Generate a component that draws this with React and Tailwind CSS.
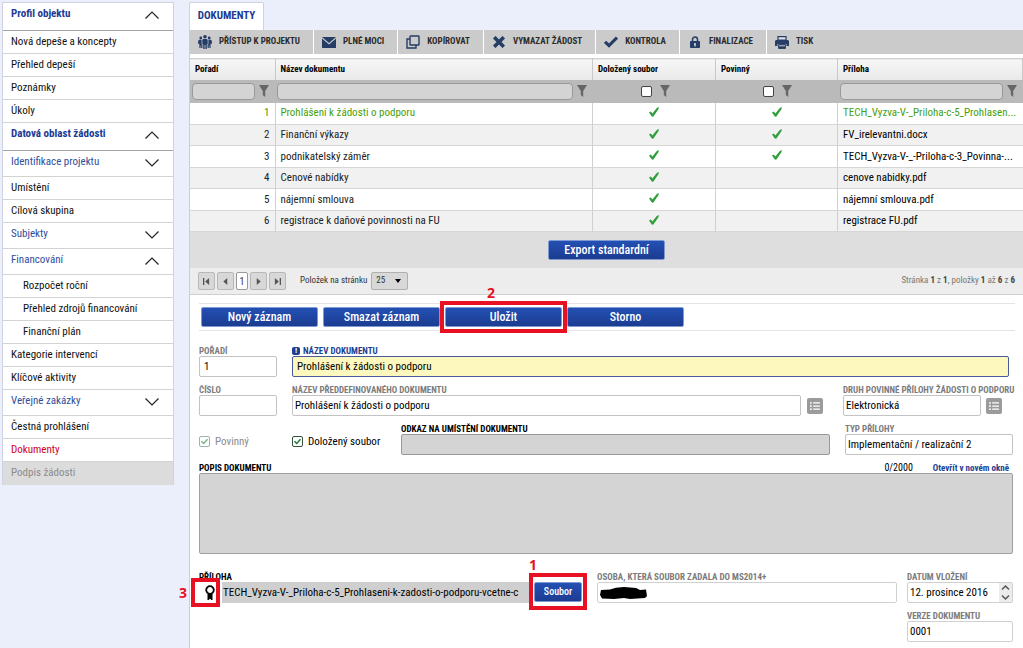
import { FaListUl } from 'react-icons/fa';

const menu = [
  { label: 'Profil objektu', kind: 'header', open: true },
  { label: 'Nová depeše a koncepty' },
  { label: 'Přehled depeší' },
  { label: 'Poznámky' },
  { label: 'Úkoly' },
  { label: 'Datová oblast žádosti', kind: 'header', open: true },
  { label: 'Identifikace projektu', kind: 'group' },
  { label: 'Umístění' },
  { label: 'Cílová skupina' },
  { label: 'Subjekty', kind: 'group' },
  { label: 'Financování', kind: 'group', open: true },
  { label: 'Rozpočet roční', kind: 'child' },
  { label: 'Přehled zdrojů financování', kind: 'child' },
  { label: 'Finanční plán', kind: 'child' },
  { label: 'Kategorie intervencí' },
  { label: 'Klíčové aktivity' },
  { label: 'Veřejné zakázky', kind: 'group' },
  { label: 'Čestná prohlášení' },
  { label: 'Dokumenty', kind: 'active' },
  { label: 'Podpis žádosti', kind: 'disabled' },
];

const menuStyles = {
  header: 'h-7 pl-2 pb-1 font-bold text-[#1c3a94] border-[#a3a3a3]',
  group: 'h-[26px] pl-2 pb-0.5 text-[#2f4d9c] border-[#d3d3d3]',
  item: 'h-[23px] pl-2 text-[#111] border-[#d3d3d3]',
  child: 'h-[23px] pl-5 text-[#111] border-[#d3d3d3]',
  active: 'h-[23px] pl-2 text-[#d0021b] border-[#d3d3d3]',
  disabled: 'h-[23px] pl-2 text-[#8b8b8b] bg-[#dcdcdc] border-[#dcdcdc]',
};

const documents = [
  { id: 1, name: 'Prohlášení k žádosti o podporu', attached: true, required: true, file: 'TECH_Vyzva-V-_Priloha-c-5_Prohlasen...', selected: true },
  { id: 2, name: 'Finanční výkazy', attached: true, required: true, file: 'FV_irelevantni.docx' },
  { id: 3, name: 'podnikatelský záměr', attached: true, required: true, file: 'TECH_Vyzva-V-_-Priloha-c-3_Povinna-...' },
  { id: 4, name: 'Cenové nabídky', attached: true, file: 'cenove nabidky.pdf' },
  { id: 5, name: 'nájemní smlouva', attached: true, file: 'nájemní smlouva.pdf' },
  { id: 6, name: 'registrace k daňové povinnosti na FU', attached: true, file: 'registrace FU.pdf' },
];

function Chevron({ open }) {
  return (
    <svg viewBox="0 0 14 8" className="mr-3.5 h-2 w-3.5 shrink-0" fill="none" stroke="#222" strokeWidth="1.2">
      <path d={open ? 'M0.5 7.5 7 1 13.5 7.5' : 'M0.5 0.5 7 7 13.5 0.5'} />
    </svg>
  );
}

function PeopleIcon() {
  return (
    <svg viewBox="0 0 14 14" className="h-3.5 w-3.5" fill="#263d66">
      <circle cx="7" cy="1.8" r="1.8" />
      <circle cx="2.8" cy="3" r="1.4" />
      <circle cx="11.2" cy="3" r="1.4" />
      <path d="M5.2 4h3.6l.9 1v4.200h-.9V14H7.400v-4h-.8v4H5.200V9.200h-.9V5z" />
      <path d="M1.200 4.800h2.400v4.800h.8V13H3.200v-2.400h-.6V13H1.400V9L0 8.600.2 5.800z" />
      <path d="M12.800 4.800h-2.400v4.800h-.8V13h1.200v-2.400h.6V13h1.200V9l1.400-.4-.2-2.800z" />
    </svg>
  );
}

function MailIcon() {
  return (
    <svg viewBox="0 0 14 11" className="h-[11px] w-3.5" fill="#263d66">
      <path d="M0 0h14L7 6z" />
      <path d="M0 1.6 7 7.5l7-5.9V11H0z" />
    </svg>
  );
}

function CopyIcon() {
  return (
    <svg viewBox="0 0 14 14" className="h-3.5 w-3.5" fill="none" stroke="#263d66" strokeWidth="1.4">
      <rect x="4" y="1" width="9" height="9" rx="0.5" />
      <path d="M4 4H1v9h9v-3" />
    </svg>
  );
}

function CrossIcon() {
  return (
    <svg viewBox="0 0 12 12" className="h-3 w-3" stroke="#263d66" strokeWidth="3.6">
      <path d="M1.2 1.2 10.8 10.8M10.8 1.2 1.2 10.8" />
    </svg>
  );
}

function CheckIcon() {
  return (
    <svg viewBox="0 0 14 12" className="h-3 w-3.5" fill="none" stroke="#263d66" strokeWidth="3.2">
      <path d="M1 5.8 5 9.600 13 1.600" />
    </svg>
  );
}

function LockIcon() {
  return (
    <svg viewBox="0 0 10 12" className="h-3 w-2.5" fill="#263d66">
      <path d="M2.500 6V3.500a2.500 2.500 0 0 1 5 0V6" fill="none" stroke="#263d66" strokeWidth="1.500" />
      <rect y="5" width="10" height="7" rx="0.800" />
      <path d="M5 7a1 1 0 0 1 .6 1.800V10.500H4.400V8.800A1 1 0 0 1 5 7z" fill="#e8e8e8" />
    </svg>
  );
}

function PrintIcon() {
  return (
    <svg viewBox="0 0 14 13" className="h-[13px] w-3.5" fill="#263d66">
      <path d="M3 .6h8V4H3z" fill="#dfe3ea" stroke="#263d66" strokeWidth="1.2" />
      <path d="M1 4h12l1 1v5h-2.500V8h-9v2H0V5z" />
      <path d="M3.600 8.600h6.800v3.800H3.600z" stroke="#263d66" />
      <path d="M4 9.800h6" stroke="#cbcbcb" />
    </svg>
  );
}

const tools = [
  { label: 'PŘÍSTUP K PROJEKTU', icon: <PeopleIcon /> },
  { label: 'PLNÉ MOCI', icon: <MailIcon /> },
  { label: 'KOPÍROVAT', icon: <CopyIcon /> },
  { label: 'VYMAZAT ŽÁDOST', icon: <CrossIcon /> },
  { label: 'KONTROLA', icon: <CheckIcon /> },
  { label: 'FINALIZACE', icon: <LockIcon /> },
  { label: 'TISK', icon: <PrintIcon /> },
];

function Tick() {
  return (
    <svg viewBox="0 0 10 10" className="mx-auto mb-[3px] h-2.5 w-2.5" fill="#2f9e3c">
      <path d="M0 5.500 1.800 4.600 3.400 6.400 7.800 1 10 0 9.400 2.200 4.200 9.800 2.800 9.600z" />
    </svg>
  );
}

function Funnel() {
  return (
    <svg viewBox="0 0 10 12" className="h-3 w-2.5 shrink-0" fill="#666">
      <path d="M0 0h10L6.200 6v6L3.800 10V6z" />
    </svg>
  );
}

function FilterInput({ label }) {
  return (
    <div className="flex items-center gap-1 pl-0.5 pr-1.5">
      <input aria-label={label} className="h-[17px] min-w-0 flex-1 rounded-sm border border-[#999] bg-[#d4d4d4]" />
      <Funnel />
    </div>
  );
}

function FilterCheck({ label }) {
  return (
    <div className="flex items-center justify-center gap-2 pl-0.5">
      <input type="checkbox" aria-label={label} className="h-[11px] w-[11px] appearance-none rounded-xs border border-[#444] bg-white" />
      <Funnel />
    </div>
  );
}

function BlueButton({ children, className = 'w-[117px] text-xs' }) {
  return (
    <button
      type="button"
      className={`block h-5 rounded-xs border border-[#7f9ad0] bg-linear-to-b from-[#2350b4] to-[#1c3c91] font-medium leading-none text-white ${className}`}
    >
      {children}
    </button>
  );
}

function Field({ id, label, className = '', inputClass = 'border-[#c3c3c3] bg-white px-0.5', labelClass = 'text-[#7c7c7c]', badge, value }) {
  return (
    <div className={`flex flex-col ${className}`}>
      <label htmlFor={id} className={`flex items-center gap-0.5 whitespace-nowrap text-[9px] font-bold leading-[10px] ${labelClass}`}>
        {badge}
        {label}
      </label>
      <input id={id} defaultValue={value} className={`h-[21px] w-full rounded-xs border text-[11px] text-black ${inputClass}`} />
    </div>
  );
}

function ListButton({ label }) {
  return (
    <button type="button" aria-label={label} className="mb-0.5 flex h-4 w-4 shrink-0 items-center justify-center self-end rounded-xs bg-[#9b9b9b] text-white">
      <FaListUl size={10} />
    </button>
  );
}

function CheckField({ label, muted, className = '' }) {
  return (
    <label className={`flex items-center gap-[5px] self-start pt-3 text-[11px] leading-[11px] ${muted ? 'text-[#8a8a8a]' : 'text-black'} ${className}`}>
      <span className="relative block h-[11px] w-[11px]">
        <input
          type="checkbox"
          defaultChecked
          disabled={muted}
          className={`block h-[11px] w-[11px] appearance-none rounded-xs border bg-white ${muted ? 'border-[#9db5a6]' : 'border-[#33533f]'}`}
        />
        <svg viewBox="0 0 11 11" className="pointer-events-none absolute inset-0" fill="none" stroke={muted ? '#7fb38c' : '#1f7a38'} strokeWidth="1.5">
          <path d="M2.5 5.3 4.7 7.500 8.500 3.200" />
        </svg>
      </span>
      {label}
    </label>
  );
}

function PagerButton({ label, d }) {
  return (
    <button type="button" aria-label={label} className="flex h-[18px] w-[17px] items-center justify-center rounded-xs border border-[#b8b8b8] bg-[#d8d8d8]">
      <svg viewBox="0 0 8 8" className="h-[7px] w-[7px]" fill="#555">
        <path d={d} />
      </svg>
    </button>
  );
}

function Sidebar() {
  return (
    <nav className="mb-auto ml-0.5 mt-0.5 w-[172px] shrink-0 border border-b-0 border-[#d0d3df] bg-white">
      {menu.map(({ label, kind = 'item', open }) => (
        <a key={label} href="#" className={`flex items-center justify-between border-b text-[11px] ${menuStyles[kind]}`}>
          {label}
          {(kind === 'header' || kind === 'group') && <Chevron open={open} />}
        </a>
      ))}
    </nav>
  );
}

function Toolbar() {
  return (
    <div className="flex h-6 bg-[#cbcbcb]">
      {tools.map(({ label, icon }, i) => (
        <button
          key={label}
          type="button"
          className={`flex items-center gap-[7px] whitespace-nowrap pl-2 pr-[13px] text-[9px] font-bold text-[#2b2b2b] ${i < tools.length - 1 ? 'border-r border-white' : ''}`}
        >
          <span className="flex w-3.5 justify-center">{icon}</span>
          {label}
        </button>
      ))}
    </div>
  );
}

function DocumentTable() {
  return (
    <table className="mt-1 w-full table-fixed border-collapse text-left">
      <colgroup>
        <col className="w-[85px]" />
        <col />
        <col className="w-[123px]" />
        <col className="w-[122px]" />
        <col className="w-[185px]" />
      </colgroup>
      <thead>
        <tr className="h-[21px] border-t border-[#d0d0d0] bg-linear-to-b from-[#f6f6f6] to-[#e9e9e9] text-[9px] text-black">
          {['Pořadí', 'Název dokumentu', 'Doložený soubor', 'Povinný', 'Příloha'].map((title) => (
            <th key={title} className="border-r border-[#c8c8c8] px-[5px] py-0 font-bold">{title}</th>
          ))}
        </tr>
        <tr className="h-[23px] bg-[#bababa]">
          <td className="p-0"><FilterInput label="Pořadí" /></td>
          <td className="p-0"><FilterInput label="Název dokumentu" /></td>
          <td className="p-0"><FilterCheck label="Doložený soubor" /></td>
          <td className="p-0"><FilterCheck label="Povinný" /></td>
          <td className="p-0"><FilterInput label="Příloha" /></td>
        </tr>
      </thead>
      <tbody className="text-[11px] leading-4">
        {documents.map((doc) => (
          <tr
            key={doc.id}
            className={`border-b border-[#d6d6d6] odd:h-[22px] odd:bg-white even:h-[21px] even:bg-[#f1f1f1] ${doc.selected ? 'text-[#46a00a]' : 'text-[#222]'}`}
          >
            <td className="border-r border-[#d0d0d0] px-[5px] py-0 text-right">{doc.id}</td>
            <td className="border-r border-[#d0d0d0] px-[5px] py-0">{doc.name}</td>
            <td className="border-r border-[#d0d0d0] p-0">{doc.attached && <Tick />}</td>
            <td className="border-r border-[#d0d0d0] p-0">{doc.required && <Tick />}</td>
            <td className={`whitespace-nowrap py-0 pl-[5px] ${doc.selected ? '' : 'text-black'}`}>{doc.file}</td>
          </tr>
        ))}
      </tbody>
    </table>
  );
}

function Pager() {
  return (
    <div className="flex h-[27px] items-center border-b border-[#cfcfcf] bg-[#ededed] px-2 text-[9px] text-[#333]">
      <div className="flex items-center gap-0.5">
        <PagerButton label="První" d="M0 0h1.500v8H0zM7 0v8L2.500 4z" />
        <PagerButton label="Předchozí" d="M6 0v8L1.500 4z" />
        <span className="flex h-[18px] w-3 items-center justify-center rounded-xs border border-[#999] bg-white text-[10px]">1</span>
        <PagerButton label="Další" d="M2 0v8l4.500-4z" />
        <PagerButton label="Poslední" d="M6.500 0H8v8H6.500zM1 0v8l4.500-4z" />
      </div>
      <label htmlFor="page-size" className="ml-3.5 mr-1">Položek na stránku</label>
      <span className="relative">
        <select id="page-size" className="block h-[18px] w-[37px] appearance-none rounded-xs border border-[#b0b0b0] bg-[#d8d8d8] pl-1">
          <option>25</option>
        </select>
        <svg viewBox="0 0 6 4" className="pointer-events-none absolute right-[7px] top-[7px] h-1 w-1.5">
          <path d="M0 0h6L3 4z" />
        </svg>
      </span>
      <p className="ml-auto text-[#777]">
        Stránka <b className="text-[#444]">1</b> z <b className="text-[#444]">1</b>, položky <b className="text-[#444]">1</b> až <b className="text-[#444]">6</b> z <b className="text-[#444]">6</b>
      </p>
    </div>
  );
}

function Mark({ number, box, digit }) {
  return (
    <>
      <span className={`pointer-events-none absolute z-10 border-4 border-[#e81123] ${box}`} />
      <span className={`absolute z-10 font-['Noto_Sans',sans-serif] text-sm font-bold leading-[14px] text-[#e81123] ${digit}`}>{number}</span>
    </>
  );
}

function DocumentForm() {
  return (
    <form className="flex flex-col gap-2 pb-1 pl-[9px] pr-2.5 pt-2">
      <div className="-mr-0.5 mb-[7px] flex gap-[5px] border-y border-[#e4e4e4] px-0.5 py-[3px]">
        <BlueButton>Nový záznam</BlueButton>
        <BlueButton>Smazat záznam</BlueButton>
        <div className="relative">
          <BlueButton>Uložit</BlueButton>
          <Mark number="2" box="-inset-x-[5px] -inset-y-1.5" digit="-top-[21px] left-[42px]" />
        </div>
        <BlueButton>Storno</BlueButton>
      </div>

      <div className="flex gap-[15px]">
        <Field id="order" label="POŘADÍ" value="1" className="w-[78px]" inputClass="border-[#c3c3c3] bg-white px-1" />
        <Field
          id="name"
          label="NÁZEV DOKUMENTU"
          value="Prohlášení k žádosti o podporu"
          className="mr-1 flex-1"
          labelClass="text-[#1c3f92]"
          inputClass="border-[#4a5a9a] bg-[#fdf8bd] px-1"
          badge={<span className="mr-px flex h-2 w-2 items-center justify-center rounded-xs bg-[#1c3f92] text-[8px] text-white">!</span>}
        />
      </div>

      <div className="flex">
        <Field id="number" label="ČÍSLO" className="mr-[15px] w-[78px]" />
        <Field id="predefined" label="NÁZEV PŘEDDEFINOVANÉHO DOKUMENTU" value="Prohlášení k žádosti o podporu" className="mr-1.5 flex-1" />
        <ListButton label="Vybrat dokument" />
        <Field id="kind" label="DRUH POVINNÉ PŘÍLOHY ŽÁDOSTI O PODPORU" value="Elektronická" className="ml-5 mr-[5px] w-[138px]" />
        <ListButton label="Vybrat druh přílohy" />
        <span className="w-[11px]" />
      </div>

      <div className="flex">
        <CheckField label="Povinný" muted className="w-[93px]" />
        <CheckField label="Doložený soubor" className="w-[109px]" />
        <Field id="location" label="ODKAZ NA UMÍSTĚNÍ DOKUMENTU" labelClass="text-black" inputClass="border-[#999] bg-[#d4d4d4]" className="mr-[15px] flex-1" />
        <Field id="type" label="TYP PŘÍLOHY" value="Implementační / realizační 2" className="w-[168px]" />
      </div>

      <div className="mb-2.5 flex flex-col">
        <div className="flex h-2.5 items-center text-[9px] font-bold leading-[10px]">
          <label htmlFor="description">POPIS DOKUMENTU</label>
          <span className="ml-auto mr-5 text-[10px] font-normal">0/2000</span>
          <a href="#" className="mr-1 text-[#1c3f92]">Otevřít v novém okně</a>
        </div>
        <textarea id="description" className="h-[81px] w-full resize-none rounded-xs border border-[#a0a0a0] bg-[#d4d4d4]" />
      </div>

      <div className="flex">
        <div className="mr-[15px] flex flex-col">
          <label htmlFor="attachment" className="text-[9px] font-bold leading-[10px]">PŘÍLOHA</label>
          <div className="flex">
            <span className="relative flex h-[21px] w-[23px] items-center justify-center pr-0.5">
              <svg viewBox="0 0 10 16" className="h-4 w-2.5" fill="none" stroke="#000" strokeWidth="1.8">
                <circle cx="5" cy="5" r="3.800" />
                <path d="M3 9h4v6L5 13.200 3 15z" fill="#000" strokeWidth="1" />
              </svg>
              <Mark number="3" box="-bottom-1 -left-2 -top-1 right-0.5" digit="-left-5 top-1" />
            </span>
            <input
              id="attachment"
              readOnly
              defaultValue="TECH_Vyzva-V-_Priloha-c-5_Prohlaseni-k-zadosti-o-podporu-vcetne-c"
              className="h-[21px] w-[309px] bg-[#cfcfcf] px-px text-[11px] text-black"
            />
            <div className="relative ml-[3px]">
              <BlueButton className="w-12 text-[10px]">Soubor</BlueButton>
              <Mark number="1" box="-inset-x-[5px] -bottom-[7px] -top-[9px]" digit="-left-[5px] -top-6" />
            </div>
          </div>
        </div>
        <div className="relative mr-2.5 flex-1">
          <Field id="person" label="OSOBA, KTERÁ SOUBOR ZADALA DO MS2014+" inputClass="border-[#d0d0d0] bg-white" />
          <svg viewBox="0 0 47 12" className="pointer-events-none absolute bottom-1 left-[3px] h-3 w-[47px]">
            <path d="M1 3 10 2.500 16 .8 24 0 36 1 40 3 46 2.500 47 9 45 11 30 12 24 11 14 12 2 11.500 0 8z" />
          </svg>
        </div>
        <div className="relative w-[106px]">
          <Field id="date" label="DATUM VLOŽENÍ" value="12. prosince 2016" inputClass="border-[#d0d0d0] bg-white px-0.5" />
          <svg viewBox="0 0 13 19" className="pointer-events-none absolute bottom-px right-px h-[19px] w-[13px] bg-[#ececec]" fill="none" stroke="#555" strokeWidth="1.5">
            <path d="M3 6.500 6.500 3 10 6.500M3 12.500 6.500 16 10 12.500" />
          </svg>
        </div>
      </div>
      <Field id="version" label="VERZE DOKUMENTU" value="0001" className="w-[106px] self-end" inputClass="border-[#d0d0d0] bg-white px-0.5" />
    </form>
  );
}

export default function App() {
  return (
    <div className="flex min-h-screen gap-[15px] overflow-hidden bg-[#ebeefb] font-['Roboto_Condensed','Liberation_Sans_Narrow',Roboto,sans-serif]">
      <Sidebar />
      <main className="flex min-w-0 flex-1 flex-col pt-0.5">
        <div role="tablist" className="flex">
          <button type="button" role="tab" aria-selected="true" className="h-7 w-[75px] rounded-t-xs border border-b-0 border-[#d0d3df] bg-white text-[11px] font-bold text-[#1c3a94]">
            DOKUMENTY
          </button>
        </div>
        <div className="flex-1 border-l border-[#c9cde0] bg-white">
          <Toolbar />
          <DocumentTable />
          <div className="flex h-9 items-center justify-center bg-[#dedede]">
            <BlueButton>Export standardní</BlueButton>
          </div>
          <Pager />
          <DocumentForm />
        </div>
      </main>
    </div>
  );
}
